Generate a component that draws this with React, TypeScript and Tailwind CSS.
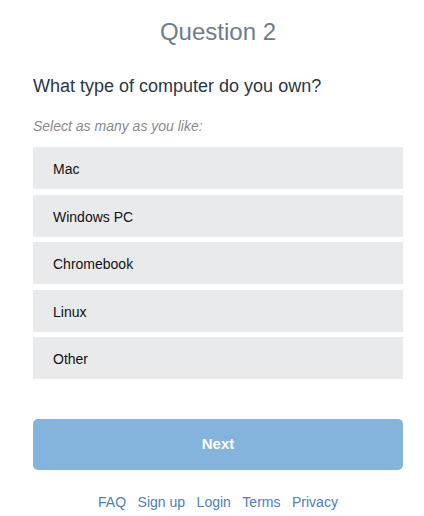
import { useState } from "react";

const options = ["Mac", "Windows PC", "Chromebook", "Linux", "Other"];
const links = ["FAQ", "Sign up", "Login", "Terms", "Privacy"];

export default function App() {
  const [picked, setPicked] = useState<string[]>([]);

  const toggle = (opt: string) => {
    setPicked((prev) =>
      prev.includes(opt) ? prev.filter((p) => p !== opt) : [...prev, opt]
    );
  };

  return (
    <div className="min-h-screen bg-white font-['Liberation_Sans',Arial,sans-serif]">
      <div className="ml-[33px] w-[370px] pt-[18px]">
        <h1 className="text-center text-[24px] leading-[28px] font-normal text-[#6e7d88]">
          Question 2
        </h1>

        <h2 className="mt-[29px] text-[18px] leading-[22px] font-normal text-[#2a3744]">
          What type of computer do you own?
        </h2>

        <p className="mt-[20px] text-[14px] leading-[18px] italic text-[#8a8a8a]">
          Select as many as you like:
        </p>

        {/* options */}
        <div className="mt-[12px] flex flex-col gap-[5.5px]">
          {options.map((opt) => (
            <button
              key={opt}
              onClick={() => toggle(opt)}
              className={
                "flex h-[42px] items-center pl-[20px] pt-[3px] text-left text-[14px] text-[#111] " +
                (picked.includes(opt) ? "bg-[#d6dde5]" : "bg-[#e9eaec]")
              }
            >
              {opt}
            </button>
          ))}
        </div>

        <button
          className="mt-[40px] flex h-[51px] w-full items-center justify-center rounded-[5px] bg-[#84b3dc] text-[15px] font-bold text-white"
        >
          Next
        </button>

        <div className="mt-[23px] flex justify-center gap-[11.5px] text-[14px] leading-[18px] text-[#4d80b6]">
          {links.map((l) => (
            <a key={l} href="#" className="hover:underline">
              {l}
            </a>
          ))}
        </div>
      </div>
    </div>
  );
}
